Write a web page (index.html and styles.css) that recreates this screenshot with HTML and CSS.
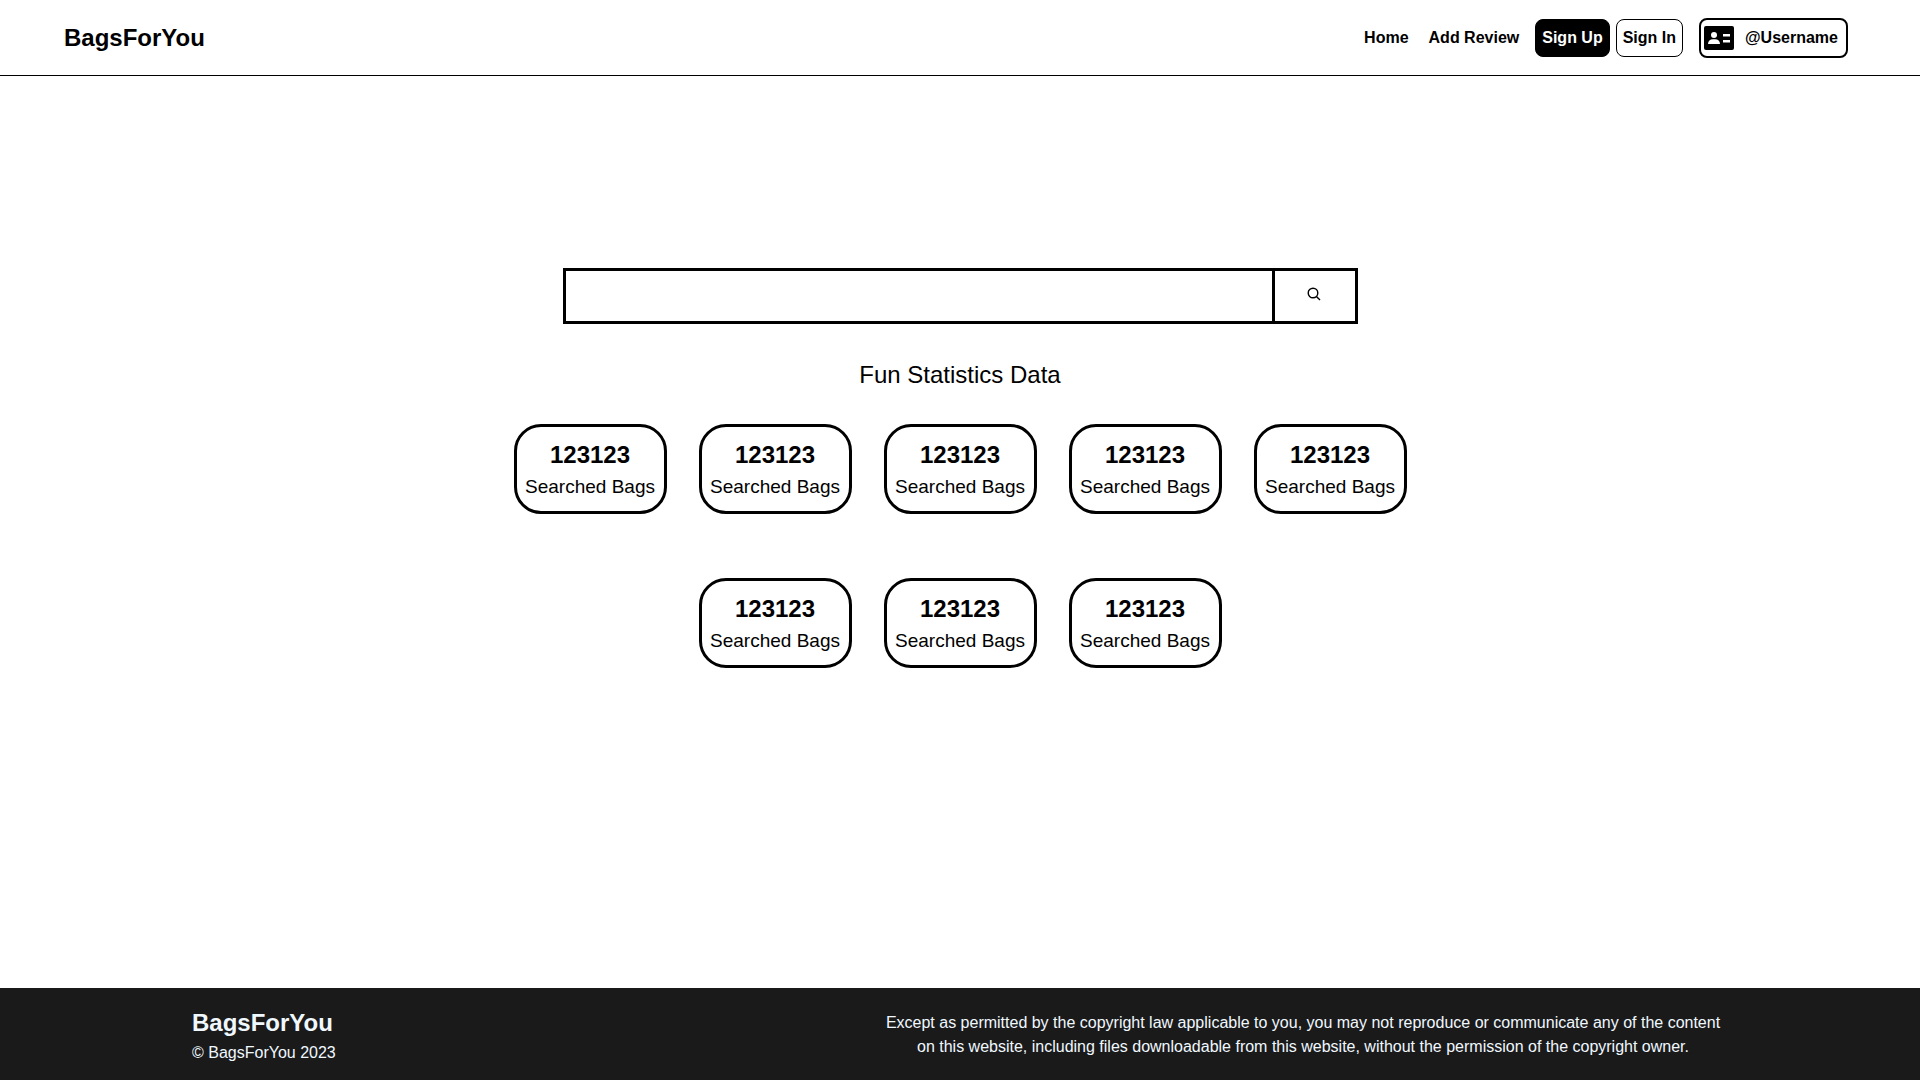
FILE: index.html
```html
<!DOCTYPE html>
<html lang="en">
<head>
<meta charset="utf-8">
<meta name="viewport" content="width=device-width, initial-scale=1">
<title>BagsForYou</title>
<link rel="stylesheet" href="styles.css">
</head>
<body>
<header class="header">
  <a class="brand" href="#">BagsForYou</a>
  <nav class="nav">
    <a class="nav-link" href="#">Home</a>
    <a class="nav-link" href="#">Add Review</a>
    <div class="auth">
      <button class="btn btn-dark" type="button">Sign Up</button>
      <button class="btn" type="button">Sign In</button>
    </div>
    <a class="profile" href="#">
      <svg class="profile-icon" viewBox="0 0 30 24" aria-hidden="true">
        <rect width="30" height="24" rx="2"/>
        <g fill="#fff">
          <circle cx="10" cy="9" r="3"/>
          <path d="M4 18c0-3 2-4.700 5-4.700h2c3 0 5 1.700 5 4.700z"/>
          <path d="M19 8h7v2.500h-7zM19 14h7v2.500h-7z"/>
        </g>
      </svg>
      <span>@Username</span>
    </a>
  </nav>
</header>
<main class="main">
  <form class="search" role="search">
    <input class="search-input" type="text" aria-label="Search bags">
    <button class="search-button" type="button" aria-label="Search">
      <svg class="search-icon" viewBox="0 0 14 14" aria-hidden="true"><circle cx="6" cy="6" r="4.8"/><path d="M9.4 9.4l3.6 3.6"/></svg>
    </button>
  </form>
  <h2 class="stats-title">Fun Statistics Data</h2>
  <section class="stats">
    <div class="stat-row">
      <article class="stat"><strong class="stat-number">123123</strong><span>Searched Bags</span></article>
      <article class="stat"><strong class="stat-number">123123</strong><span>Searched Bags</span></article>
      <article class="stat"><strong class="stat-number">123123</strong><span>Searched Bags</span></article>
      <article class="stat"><strong class="stat-number">123123</strong><span>Searched Bags</span></article>
      <article class="stat"><strong class="stat-number">123123</strong><span>Searched Bags</span></article>
    </div>
    <div class="stat-row">
      <article class="stat"><strong class="stat-number">123123</strong><span>Searched Bags</span></article>
      <article class="stat"><strong class="stat-number">123123</strong><span>Searched Bags</span></article>
      <article class="stat"><strong class="stat-number">123123</strong><span>Searched Bags</span></article>
    </div>
  </section>
</main>
<footer class="footer">
  <div class="footer-info">
    <div class="footer-brand">BagsForYou</div>
    <div>© BagsForYou 2023</div>
  </div>
  <p class="legal">Except as permitted by the copyright law applicable to you, you may not reproduce or communicate any of the content on this website, including files downloadable from this website, without the permission of the copyright owner.</p>
</footer>
</body>
</html>
```
FILE: styles.css
```css
* {
  box-sizing: border-box;
}

body {
  display: flex;
  flex-direction: column;
  min-height: 100vh;
  margin: 0;
  background: #fff;
  color: #000;
  font: 16px/24px "Liberation Sans", Arial, sans-serif;
}

a {
  color: inherit;
  text-decoration: none;
}

button,
input {
  font: inherit;
  color: inherit;
}

.header {
  display: flex;
  align-items: center;
  justify-content: space-between;
  padding: 18px 72px 17px 64px;
  border-bottom: 1px solid #000;
}

.brand {
  font-size: 24px;
  font-weight: bold;
}

.nav {
  display: flex;
  align-items: center;
  font-weight: bold;
}

.nav-link {
  margin-right: 20px;
}

.auth {
  display: flex;
  align-items: center;
  gap: 6px;
  margin: 0 16px 0 -4px;
}

.btn {
  padding: 6px;
  border: 1px solid #000;
  border-radius: 8px;
  background: #fff;
  font-weight: bold;
}

.btn-dark {
  background: #000;
  color: #fff;
}

.profile {
  display: flex;
  align-items: center;
  gap: 11px;
  padding: 6px 8px 6px 3px;
  border: 2px solid #000;
  border-radius: 8px;
}

.profile-icon {
  width: 30px;
  height: 24px;
}

.main {
  flex: 1;
  padding: 192px 32px 64px;
}

.search {
  display: flex;
  width: 100%;
  max-width: 795px;
  height: 56px;
  margin: 0 auto;
  border: 3px solid #000;
}

.search-input {
  flex: 1;
  min-width: 0;
  padding: 0 16px;
  border: 0;
  background: #fff;
}

.search-button {
  display: flex;
  align-items: center;
  justify-content: center;
  width: 83px;
  padding: 0 2px 4px 0;
  border: 0;
  border-left: 3px solid #000;
  background: #fff;
}

.search-icon {
  width: 14px;
  height: 14px;
  fill: none;
  stroke: #000;
  stroke-width: 1.4;
}

.stats-title {
  margin: 37px 0 35px;
  font-size: 24px;
  line-height: 28px;
  font-weight: normal;
  text-align: center;
}

.stats {
  display: grid;
  gap: 64px;
}

.stat-row {
  display: flex;
  flex-wrap: wrap;
  justify-content: center;
  gap: 32px;
}

.stat {
  display: flex;
  flex-direction: column;
  align-items: center;
  min-width: 153px;
  padding: 12px 8px 8px;
  border: 3px solid #000;
  border-radius: 27px;
  font-size: 19px;
  line-height: 32px;
}

.stat-number {
  font-size: 24px;
}

.footer {
  display: flex;
  align-items: center;
  justify-content: space-between;
  gap: 64px;
  padding: 17px 10% 15px;
  background: #1a1a1a;
  color: aliceblue;
}

.footer-info {
  display: grid;
  gap: 2px;
  padding-top: 2px;
}

.footer-brand {
  font-size: 24px;
  line-height: 32px;
  font-weight: bold;
}

.legal {
  max-width: 850px;
  margin: 0;
  text-align: center;
}
```
